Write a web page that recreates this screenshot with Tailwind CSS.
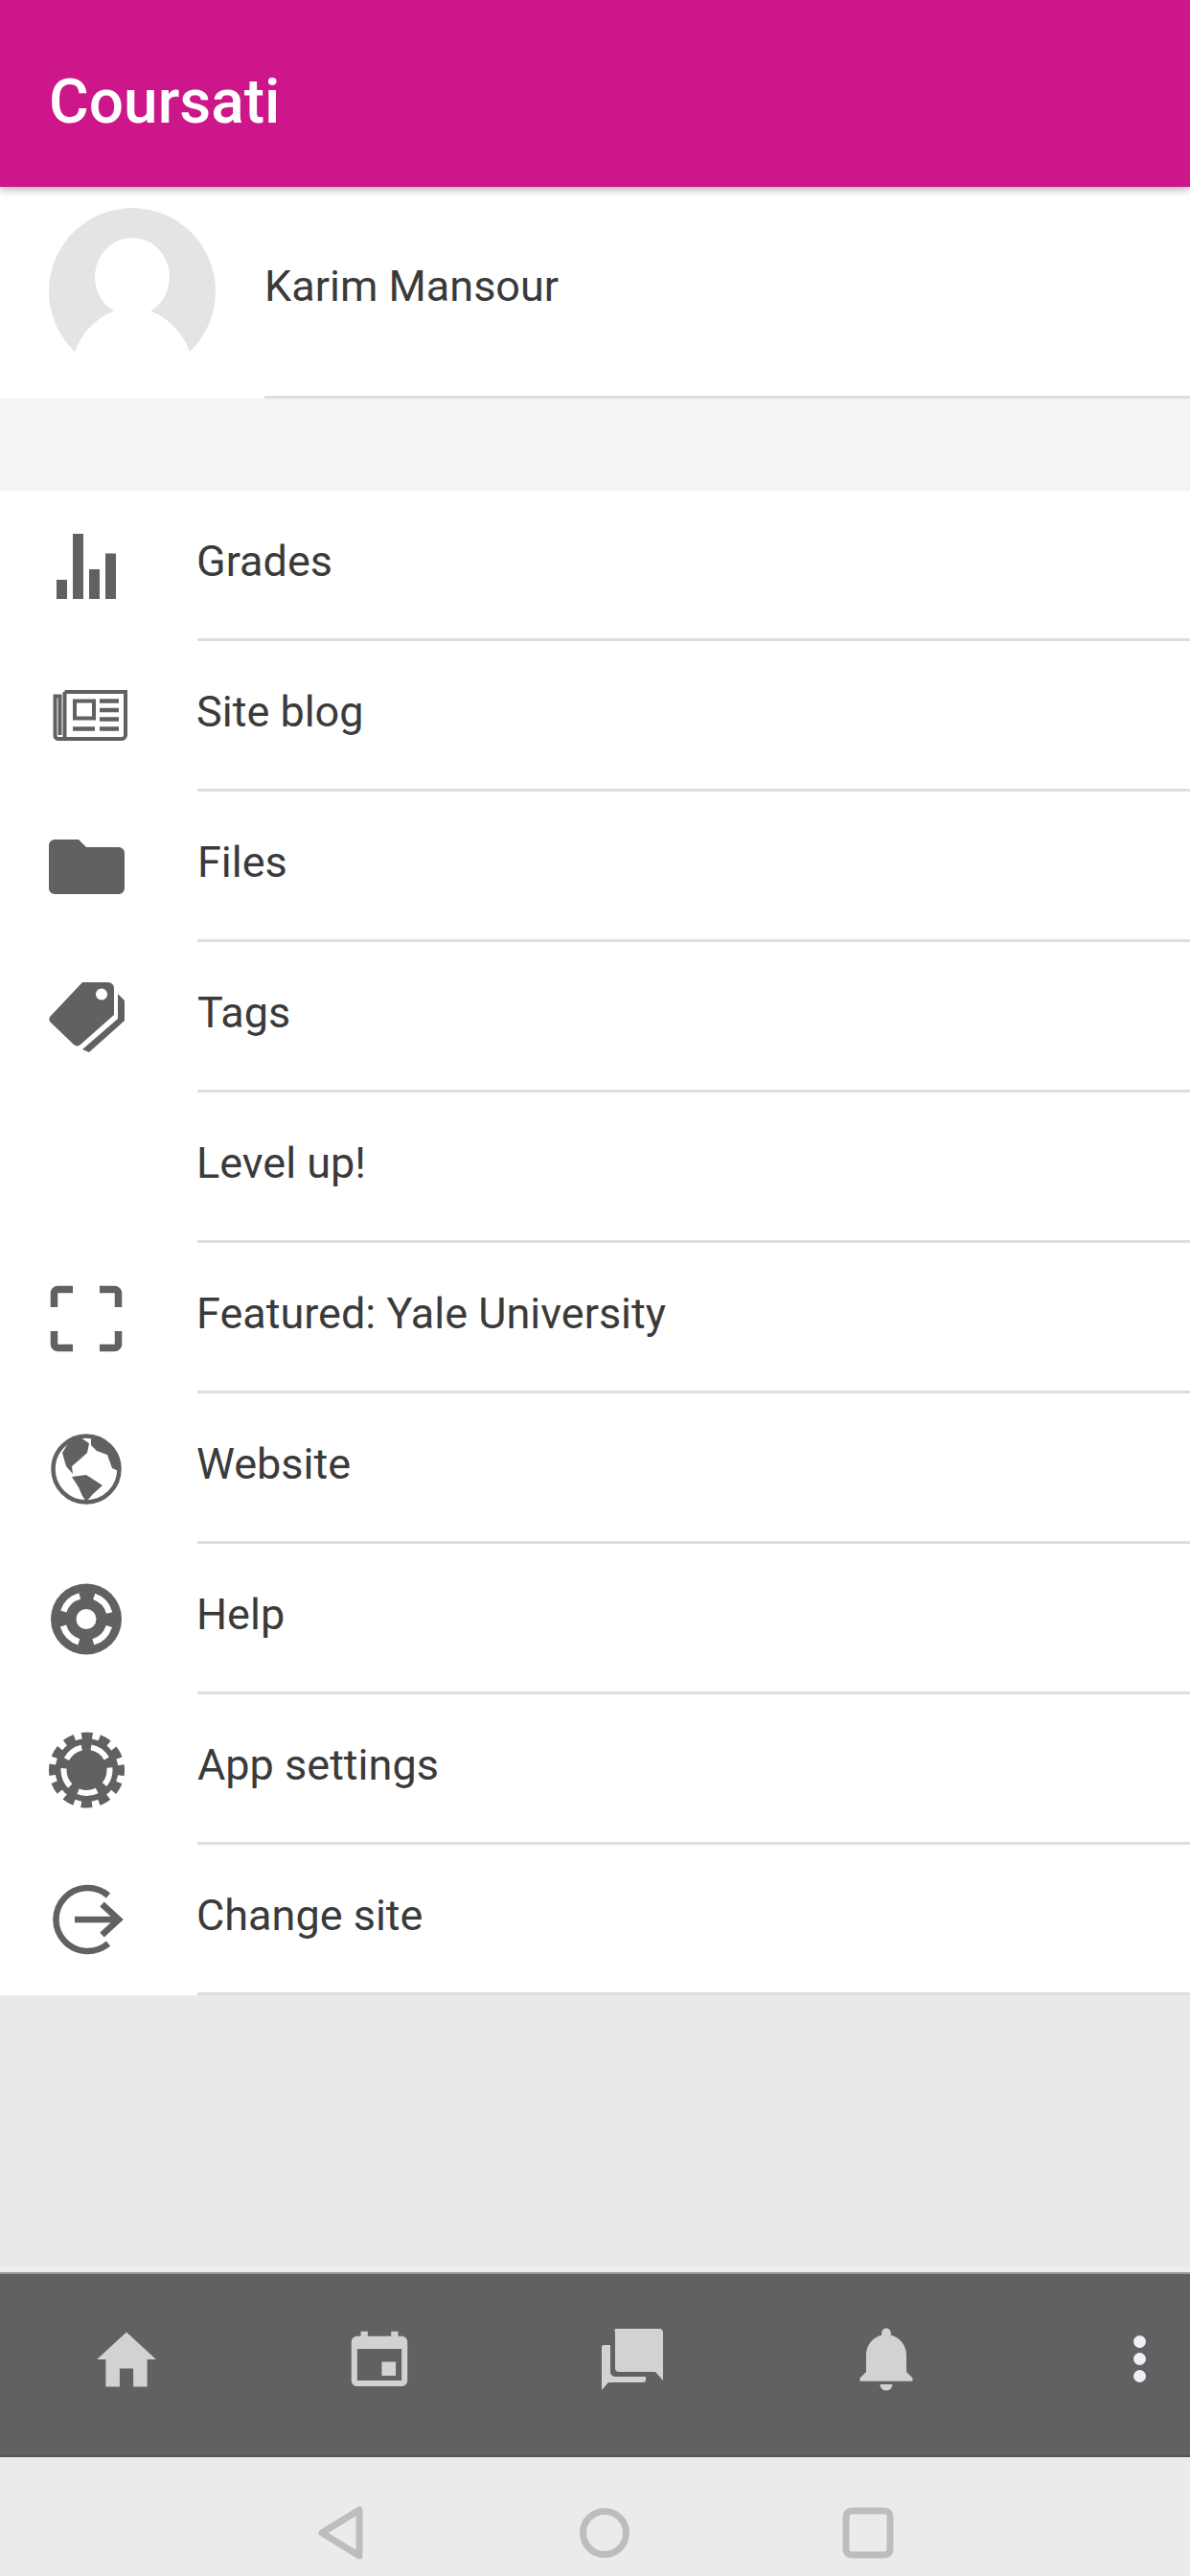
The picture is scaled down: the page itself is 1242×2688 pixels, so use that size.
<!DOCTYPE html>
<html lang="en">
<head>
	<meta charset="UTF-8" />
	<meta name="viewport" content="width=device-width, initial-scale=1.0" />
	<title>Coursati</title>
	<script src="https://cdn.jsdelivr.net/npm/@tailwindcss/browser@4"></script>
</head>
<body class="bg-[#e9e9e9] font-[Roboto,sans-serif] w-[1242px] h-[2688px] overflow-hidden flex flex-col">

	<!-- top bar -->
	<header class="relative z-10 h-[195px] shrink-0 bg-[#cd1689] shadow-[0_3px_8px_rgba(0,0,0,0.3)] flex items-center pl-[51px] pt-[18px]">
		<h1 class="text-[64px] font-medium leading-none text-white">Coursati</h1>
	</header>

	<!-- user row -->
	<section class="h-[221px] shrink-0 bg-white flex">
		<div class="w-[276px] shrink-0 pl-[51px] pt-[22px]">
			<svg class="w-[174px] h-[174px]" viewBox="0 0 174 174">
				<circle cx="87" cy="87" r="87" fill="#e4e4e4" />
				<ellipse cx="87" cy="72" rx="39" ry="41" fill="#fff" />
				<path d="M27 150C36 125 60 104 87 104s51 21 60 46v24H27z" fill="#fff" />
			</svg>
		</div>
		<div class="flex-1 border-b-[3px] border-[#dedede] flex items-center pb-[11px]">
			<span class="text-[45px] leading-none text-[#3a3a3a]">Karim Mansour</span>
		</div>
	</section>

	<div class="h-[96px] shrink-0 bg-[#f4f4f4]"></div>

	<!-- menu -->
	<nav class="shrink-0 bg-white">
		<a class="h-[157px] flex">
			<div class="w-[206px] shrink-0 pl-[51px] flex items-center pb-[3px]">
				<svg class="w-[90px] h-[90px]" viewBox="0 0 90 90" fill="#616161">
					<rect x="8" y="61" width="11" height="20" /><rect x="25" y="13" width="11" height="68" /><rect x="42" y="50" width="11" height="31" /><rect x="59" y="33.5" width="11" height="47.5" />
				</svg>
			</div>
			<div class="flex-1 border-b-[3px] border-[#dedede] flex items-center pb-[7px] indent-[-1px] text-[45px] leading-none text-[#3a3a3a]">Grades</div>
		</a>
		<a class="h-[157px] flex">
			<div class="w-[206px] shrink-0 pl-[51px] flex items-center pb-[3px]">
				<svg class="w-[90px] h-[90px]" viewBox="0 0 90 90" fill="none" stroke="#616161" stroke-width="4">
					<path d="M16.500 21H80V66a4 4 0 0 1-4 4H10a3.500 3.500 0 0 1-3.500-3.500V25.500H11.500V66M16.500 21V70" />
					<rect x="27" y="30.500" width="20" height="18" />
					<path d="M53 30.500H73M53 40H73M53 49.500H73M25 59.500H48M53 59.500H73" stroke-width="4.500" />
				</svg>
			</div>
			<div class="flex-1 border-b-[3px] border-[#dedede] flex items-center pb-[7px] indent-[-1px] text-[45px] leading-none text-[#3a3a3a]">Site blog</div>
		</a>
		<a class="h-[157px] flex">
			<div class="w-[206px] shrink-0 pl-[51px] flex items-center pb-[3px]">
				<svg class="w-[90px] h-[90px]" viewBox="0 0 90 90" fill="#616161">
					<path d="M0 24a6 6 0 0 1 6-6h25l8 8h34a6 6 0 0 1 6 6v37a6 6 0 0 1-6 6H6a6 6 0 0 1-6-6z" />
				</svg>
			</div>
			<div class="flex-1 border-b-[3px] border-[#dedede] flex items-center pb-[7px] text-[45px] leading-none text-[#3a3a3a]">Files</div>
		</a>
		<a class="h-[157px] flex">
			<div class="w-[206px] shrink-0 pl-[51px] flex items-center pb-[3px]">
				<svg class="w-[90px] h-[90px]" viewBox="0 0 90 90" fill="#616161">
					<path fill-rule="evenodd" d="M35 10H62a6 6 0 0 1 6 6V44L33 75a5 5 0 0 1-7 0L2 52a4.500 4.500 0 0 1 0-7zM55 16.500a6 6 0 1 0 .01 0z" />
					<path d="M72 22l7 7V50L42 83l-7-3L72 48z" />
				</svg>
			</div>
			<div class="flex-1 border-b-[3px] border-[#dedede] flex items-center pb-[7px] text-[45px] leading-none text-[#3a3a3a]">Tags</div>
		</a>
		<a class="h-[157px] flex">
			<div class="w-[206px] shrink-0"></div>
			<div class="flex-1 border-b-[3px] border-[#dedede] flex items-center pb-[7px] indent-[-1px] text-[45px] leading-none text-[#3a3a3a]">Level up!</div>
		</a>
		<a class="h-[157px] flex">
			<div class="w-[206px] shrink-0 pl-[51px] flex items-center pb-[3px]">
				<svg class="w-[90px] h-[90px]" viewBox="0 0 90 90" fill="none" stroke="#616161" stroke-width="7.500" stroke-linejoin="round">
					<path d="M25 16.500H10a4 4 0 0 0-4.500 4.500V35" />
					<path d="M53 16.500H68a4 4 0 0 1 4.500 4.500V35" />
					<path d="M25 77.500H10a4 4 0 0 1-4.500-4.500V60" />
					<path d="M53 77.500H68a4 4 0 0 0 4.500-4.500V60" />
				</svg>
			</div>
			<div class="flex-1 border-b-[3px] border-[#dedede] flex items-center pb-[7px] indent-[-1px] text-[45px] leading-none text-[#3a3a3a]">Featured: Yale University</div>
		</a>
		<a class="h-[157px] flex">
			<div class="w-[206px] shrink-0 pl-[51px] flex items-center pb-[3px]">
				<svg class="w-[90px] h-[90px]" viewBox="0 0 90 90" fill="#616161">
					<circle cx="39" cy="47" r="34.500" fill="none" stroke="#616161" stroke-width="4.500" />
					<path d="M14 30L22 17L33 14L42 20L40 30L31 38L24 44L25 52L18 44z" />
					<path d="M24 55L39 53L56 64L46 73L39 81L35 75L31 66z" />
					<path d="M44 14C60 16 72 30 75 50L66 46L61 32L50 28L44 22z" />
				</svg>
			</div>
			<div class="flex-1 border-b-[3px] border-[#dedede] flex items-center pb-[7px] indent-[-1px] text-[45px] leading-none text-[#3a3a3a]">Website</div>
		</a>
		<a class="h-[157px] flex">
			<div class="w-[206px] shrink-0 pl-[51px] flex items-center pb-[3px]">
				<svg class="w-[90px] h-[90px]" viewBox="0 0 90 90">
					<circle cx="39" cy="46.500" r="37" fill="#616161" />
					<circle cx="39" cy="46.500" r="25" fill="none" stroke="#fff" stroke-width="6.500" stroke-dasharray="24 15.270" stroke-dashoffset="-7.600" />
					<circle cx="39" cy="46.500" r="10.500" fill="#fff" />
				</svg>
			</div>
			<div class="flex-1 border-b-[3px] border-[#dedede] flex items-center pb-[7px] indent-[-1px] text-[45px] leading-none text-[#3a3a3a]">Help</div>
		</a>
		<a class="h-[157px] flex">
			<div class="w-[206px] shrink-0 pl-[51px] flex items-center pb-[3px]">
				<svg class="w-[90px] h-[90px]" viewBox="0 0 90 90">
					<circle cx="39.500" cy="47" r="35" fill="none" stroke="#616161" stroke-width="9" stroke-dasharray="11 7.330" stroke-dashoffset="5.500" />
					<circle cx="39.500" cy="47" r="33" fill="#616161" />
					<circle cx="39.500" cy="47" r="24" fill="none" stroke="#fff" stroke-width="6" stroke-dasharray="20.200 10" stroke-dashoffset="3.800" />
					<path d="M39.500 24L46 40L62 41L50 51L53 67L39.500 58L26 67L29 51L17 41L33 40z" fill="#616161" />
				</svg>
			</div>
			<div class="flex-1 border-b-[3px] border-[#dedede] flex items-center pb-[7px] text-[45px] leading-none text-[#3a3a3a]">App settings</div>
		</a>
		<a class="h-[157px] flex">
			<div class="w-[206px] shrink-0 pl-[51px] flex items-center pb-[3px]">
				<svg class="w-[90px] h-[90px]" viewBox="0 0 90 90" fill="none" stroke="#616161" stroke-width="6.500">
					<path d="M63 21A33 33 0 1 0 63 71" transform="translate(-1 0)" />
					<path d="M27 46H70" />
					<path d="M55.500 30L73 46L55.500 62" />
				</svg>
			</div>
			<div class="flex-1 border-b-[3px] border-[#dedede] flex items-center pb-[7px] indent-[-1px] text-[45px] leading-none text-[#3a3a3a]">Change site</div>
		</a>
	</nav>

	<div class="flex-1 flex flex-col justify-end">
		<div class="h-[6px] bg-[#efefef]"></div>
	</div>

	<!-- bottom tabs -->
	<div class="h-[193px] shrink-0 bg-[#616161] border-t-2 border-b-2 border-t-[#9a9a9a] border-b-[#555] flex items-center pb-[12px]">
		<div class="w-[264px] flex justify-center">
			<svg class="w-[76px] h-[76px]" viewBox="0 0 512 512" fill="#d2d2d2"><path d="M208 448V320h96v128h97.600V256H464L256 64 48 256h62.400v192z" /></svg>
		</div>
		<div class="w-[264px] flex justify-center">
			<svg class="w-[78px] h-[78px]" viewBox="0 0 512 512" fill="#d2d2d2"><path d="M368 272h-96v96h96v-96zm-32-208v32H176V64h-48v32h-24c-22 0-40 18-40 40L64 400c0 22 18 40 40 40h304c22 0 40-18 40-40V136c0-22-18-40-40-40h-24V64h-48zm72 336H104V184h304v216z" /></svg>
		</div>
		<div class="w-[264px] flex justify-center">
			<svg class="w-[64px] h-[64px]" viewBox="0 0 64 64" fill="#d2d2d2">
				<path d="M14 0H60a4 4 0 0 1 4 4V54L56 45H18a4 4 0 0 1-4-4V4a4 4 0 0 1 0-4z" />
				<path d="M2 17H9V45a5 5 0 0 0 5 5H46V53a3 3 0 0 1-3 3H7L0 64V19a2 2 0 0 1 2-2z" />
			</svg>
		</div>
		<div class="w-[264px] flex justify-center pl-[2px]">
			<svg class="w-[80px] h-[80px]" viewBox="0 0 512 512" fill="#d2d2d2"><path d="M256 464c22.800 0 41.400-18.700 41.400-41.600h-82.800c0 22.900 18.600 41.600 41.400 41.600zm134.600-124.800V224.800c0-63.400-44.500-117.500-103.500-131V79.200c0-17.700-13.500-31.200-31.100-31.200s-31.100 13.500-31.100 31.200v14.600c-59 13.500-103.500 67.600-103.500 131v114.400L80 380.800v20.800h352v-20.800l-41.400-41.600z" /></svg>
		</div>
		<div class="flex-1 flex justify-end pr-[46px]">
			<div class="flex flex-col gap-[5px]">
				<span class="w-[13px] h-[13px] rounded-full bg-[#eef0f5]"></span>
				<span class="w-[13px] h-[13px] rounded-full bg-[#eef0f5]"></span>
				<span class="w-[13px] h-[13px] rounded-full bg-[#eef0f5]"></span>
			</div>
		</div>
	</div>

	<!-- android nav -->
	<div class="h-[124px] shrink-0 bg-[#ebebeb] flex items-center justify-center gap-[215px] pl-[20px] pt-[34px]">
		<svg class="w-[60px] h-[60px]" viewBox="0 0 60 60" fill="none" stroke="#bdbdbd" stroke-width="7" stroke-linejoin="round"><path d="M49 6V54L10 30z" /></svg>
		<svg class="w-[60px] h-[60px]" viewBox="0 0 60 60" fill="none" stroke="#bdbdbd" stroke-width="7"><circle cx="30" cy="30" r="22.500" /></svg>
		<svg class="w-[60px] h-[60px]" viewBox="0 0 60 60" fill="none" stroke="#bdbdbd" stroke-width="7"><rect x="7" y="7" width="46" height="46" rx="6" /></svg>
	</div>
</body>
</html>
